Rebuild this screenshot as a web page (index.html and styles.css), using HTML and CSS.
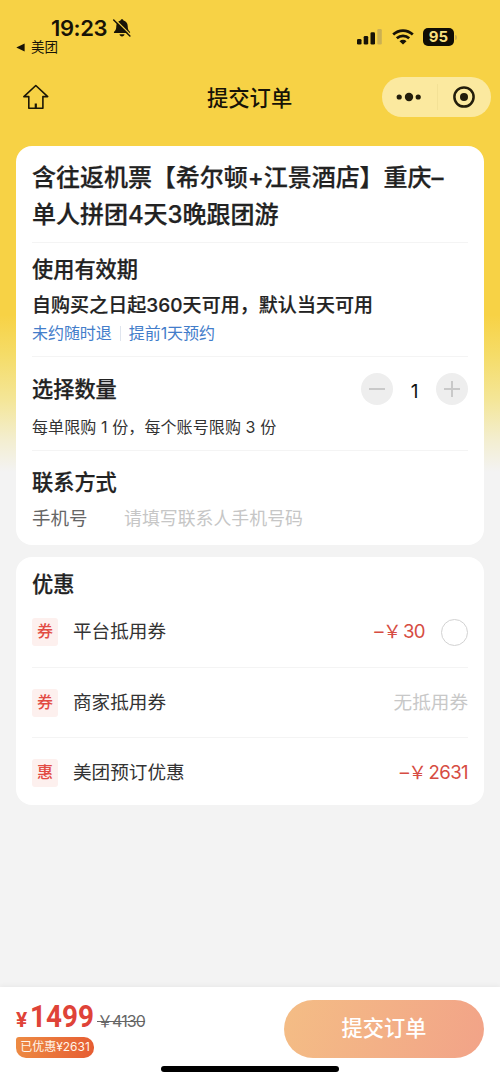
FILE: index.html
```html
<!DOCTYPE html>
<html lang="zh-CN">
<head>
<meta charset="utf-8">
<title>提交订单</title>
<link rel="stylesheet" href="styles.css">
</head>
<body>
<div class="page">
  <header class="status">
    <div class="status-left">
      <div class="clock"><span class="time">19:23</span>
        <svg class="bell" width="20" height="20" viewBox="0 0 20 20"><path d="M10 1.300c-.9 0-1.400.6-1.500 1.300C6 3.400 4.300 5.300 4.300 8c0 3.300-.7 4.300-2.200 5.700-.5.500-.2 1.300.5 1.300h14.800c.7 0 1-.8.500-1.300-1.500-1.400-2.200-2.400-2.200-5.700 0-2.700-1.700-4.600-4.200-5.400C11.400 1.900 10.900 1.300 10 1.300z" fill="#171307"/><path d="M7.500 16.200h5c-.2 1.300-1.200 2.200-2.500 2.200s-2.300-.9-2.500-2.200z" fill="#171307"/><path d="M2.800 1.200 19 17.200" stroke="#f7d245" stroke-width="1.300"/><path d="M1.700 2 17.900 18" stroke="#171307" stroke-width="1.500" stroke-linecap="round"/></svg>
      </div>
      <div class="back"><svg width="9" height="9" viewBox="0 0 9 9"><path d="M.3 4.500 8.600.5v8z" fill="#171307"/></svg><span>美团</span></div>
    </div>
    <div class="status-right">
      <svg width="25" height="18" viewBox="0 0 25 18"><g fill="#171307"><rect x="0" y="11" width="4.500" height="5.500" rx="1.300"/><rect x="6.700" y="8" width="4.500" height="8.500" rx="1.300"/><rect x="13.500" y="4.300" width="4.500" height="12.200" rx="1.300"/></g><rect x="20.300" y="1" width="4.500" height="15.500" rx="1.300" fill="#cbb052"/></svg>
      <svg class="wifi" width="22" height="16" viewBox="0 0 22 16"><g fill="none" stroke="#171307" stroke-width="2.700"><path d="M1.200 5.500c5.600-5.300 14-5.300 19.600 0"/><path d="M4.800 9.300c3.600-3.300 8.800-3.300 12.400 0"/></g><path d="M11 15.600 7.500 12.200c2-1.800 5-1.800 7 0z" fill="#171307"/></svg>
      <span class="battery">95</span><i class="battery-tip"></i>
    </div>
  </header>
  <nav class="nav">
    <svg class="home" width="26" height="26" viewBox="0 0 26 26" fill="none" stroke="#1c1706" stroke-width="1.600" stroke-linejoin="round"><path d="M12.800 1.500.9 12.600h4.900v11.700h14.100V12.600h4.800z"/><path d="M12.800 19.500v4.800" stroke-width="2.200"/></svg>
    <h1 class="nav-title">提交订单</h1>
    <div class="capsule">
      <svg width="26" height="12" viewBox="0 0 26 12" fill="#221d0b"><circle cx="3.200" cy="6" r="2.600"/><circle cx="13" cy="6" r="4.200"/><circle cx="22.200" cy="6" r="2.600"/></svg>
      <i class="capsule-line"></i>
      <svg width="24" height="24" viewBox="0 0 24 24"><circle cx="12" cy="12" r="9.600" fill="none" stroke="#221d0b" stroke-width="2.500"/><circle cx="12" cy="12" r="4" fill="#221d0b"/></svg>
    </div>
  </nav>

  <main class="content">
    <section class="card order">
      <h2 class="product">含往返机票【希尔顿+江景酒店】重庆–<br>单人拼团4天3晚跟团游</h2>
      <div class="block validity">
        <h3 class="heading">使用有效期</h3>
        <p class="valid-text">自购买之日起360天可用，默认当天可用</p>
        <p class="tags"><span>未约随时退</span><i class="tag-line"></i><span>提前1天预约</span></p>
      </div>
      <div class="block quantity">
        <div class="quantity-row">
          <h3 class="heading">选择数量</h3>
          <div class="stepper">
            <span class="step"><svg width="16" height="16" viewBox="0 0 16 16" stroke="#c9c9c9" stroke-width="2"><path d="M0 8h16"/></svg></span>
            <span class="count">1</span>
            <span class="step"><svg width="16" height="16" viewBox="0 0 16 16" stroke="#c9c9c9" stroke-width="2"><path d="M0 8h16M8 0v16"/></svg></span>
          </div>
        </div>
        <p class="limit">每单限购 1 份，每个账号限购 3 份</p>
      </div>
      <div class="block contact">
        <h3 class="heading">联系方式</h3>
        <div class="phone"><span class="phone-label">手机号</span><span class="phone-hint">请填写联系人手机号码</span></div>
      </div>
    </section>

    <section class="card discounts">
      <h3 class="heading">优惠</h3>
      <div class="row"><span class="badge">券</span><span class="name">平台抵用券</span><span class="amount">–<span class="fullwidth-yen">￥</span>30</span><i class="radio"></i></div>
      <div class="row"><span class="badge">券</span><span class="name">商家抵用券</span><span class="none">无抵用券</span></div>
      <div class="row"><span class="badge">惠</span><span class="name">美团预订优惠</span><span class="amount">–<span class="fullwidth-yen">￥</span>2631</span></div>
    </section>
  </main>

  <footer class="footer">
    <div class="pay">
      <div class="prices">
        <div class="price-line"><span class="yen">¥</span><span class="price">1499</span><s class="original">￥4130</s></div>
        <span class="saved">已优惠¥2631</span>
      </div>
      <div class="submit">提交订单</div>
    </div>
    <i class="home-bar"></i>
  </footer>
</div>
</body>
</html>
```
FILE: styles.css
```css
* { box-sizing: border-box; }
body { margin: 0; }
h1, h2, h3, p { margin: 0; }
i { display: block; }
svg { display: block; flex: none; }

.page {
  display: flex;
  flex-direction: column;
  width: 500px;
  height: 1083px;
  overflow: hidden;
  font-family: Inter, "Noto Sans CJK SC", sans-serif;
  color: #222;
  white-space: nowrap;
  background: linear-gradient(to bottom, #f7d245 0, #f7d245 315px, #f5dc68 355px, #f4e698 400px, #f3eed0 440px, #f3f3f3 472px, #f3f3f3 100%);
}

.status {
  display: flex;
  justify-content: space-between;
  height: 66px;
  padding: 16px 43px 0 16px;
  color: #171307;
}
.clock { display: flex; align-items: center; height: 23px; padding-left: 35px; gap: 5px; }
.time { font-size: 22px; font-weight: 600; letter-spacing: -0.4px; }
.back { display: flex; align-items: center; gap: 6px; height: 16px; font-size: 13.500px; line-height: 16px; }
.status-right { display: flex; align-items: center; height: 42px; }
.status-right svg:first-child { margin-left: 1px; }
.wifi { margin-left: 10px; }
.battery {
  width: 31px;
  height: 18px;
  margin-left: 9px;
  border-radius: 5px;
  background: #100d04;
  color: #f8df7e;
  font-size: 15px;
  font-weight: 700;
  line-height: 18px;
  text-align: center;
}
.battery-tip { width: 2px; height: 5px; margin-left: 1px; border-radius: 0 2px 2px 0; background: #cbb052; }

.nav {
  display: grid;
  grid-template-columns: 184px 1fr 109px;
  align-items: center;
  height: 62px;
  padding: 0 9px 0 23px;
}
.nav-title { padding-top: 1px; font-size: 21.300px; font-weight: 500; line-height: 30px; color: #171307; }
.capsule {
  display: flex;
  align-items: center;
  justify-content: space-between;
  height: 40px;
  padding: 0 15px 0 14px;
  border-radius: 20px;
  background: #fbe99f;
}
.capsule-line { width: 1px; height: 26px; background: #f3e196; }

.content { display: flex; flex-direction: column; gap: 12px; padding: 18px 16px 0; }
.card { padding: 0 16px; border-radius: 16px; background: #fff; }
.order { height: 399px; }
.heading { font-size: 21.200px; font-weight: 500; line-height: 30px; -webkit-text-stroke: 0.25px #222; }
.product {
  height: 96px;
  padding-top: 13px;
  font-size: 24px;
  font-weight: 500;
  line-height: 37px;
  letter-spacing: -0.03px;
  -webkit-text-stroke: 0.25px #222;
}
.block { border-top: 1px solid #f4f4f4; }
.validity { height: 114px; padding-top: 12px; }
.validity .heading { line-height: 29px; }
.valid-text { margin-top: 7px; font-size: 19px; font-weight: 500; line-height: 30px; letter-spacing: 0.05px; -webkit-text-stroke: 0.2px #222; }
.tags { display: flex; align-items: center; height: 24px; font-size: 16px; line-height: 24px; letter-spacing: -0.05px; color: #437dca; }
.tag-line { width: 1px; height: 15px; margin: 0 8px; background: #dfe5ee; }
.quantity { height: 94px; padding-top: 16px; }
.quantity-row { display: flex; justify-content: space-between; height: 32px; }
.quantity-row .heading { padding-top: 1px; }
.stepper { display: flex; align-items: center; width: 107px; justify-content: space-between; }
.step { display: flex; align-items: center; justify-content: center; width: 32px; height: 32px; border-radius: 50%; background: #eee; }
.count { padding-top: 6px; font-size: 19px; line-height: 24px; color: #111; }
.limit { margin-top: 10px; font-size: 16px; line-height: 24px; letter-spacing: 0.1px; color: #333; }
.contact { padding-top: 15px; }
.contact .heading { padding-top: 1px; }
.phone { display: flex; align-items: center; height: 36px; margin-top: 2px; }
.phone-label { width: 92px; font-size: 18.500px; color: #666; }
.phone-hint { font-size: 17.900px; color: #c6c6c6; }

.discounts { height: 248px; }
.discounts .heading { height: 40px; padding-top: 12px; }
.row { display: flex; align-items: center; height: 70px; font-size: 18.600px; line-height: 26px; }
.row + .row { border-top: 1px solid #f4f4f4; }
.name, .amount, .none { padding-bottom: 2px; }
.badge {
  width: 26px;
  height: 28px;
  border-radius: 3px;
  background: #fdf0ee;
  color: #e24b43;
  font-size: 16px;
  font-weight: 500;
  line-height: 26px;
  text-align: center;
}
.name { flex: 1; margin-left: 15px; color: #333; }
.amount { color: #d64c42; letter-spacing: -0.6px; }
.fullwidth-yen { letter-spacing: 1.500px; }
.none { color: #c8c8c8; }
.radio { width: 27px; height: 27px; margin-left: 16px; border: 1.500px solid #d2d2d2; border-radius: 50%; }

.footer {
  display: flex;
  flex-direction: column;
  align-items: center;
  height: 96px;
  margin-top: auto;
  background: #fff;
  box-shadow: 0 -1px 5px rgba(0, 0, 0, 0.05);
}
.pay { display: flex; justify-content: space-between; width: 100%; height: 79px; padding: 13px 16px 0; }
.price-line { display: flex; align-items: baseline; height: 37px; line-height: 32px; }
.yen { width: 14px; font-family: Roboto, sans-serif; font-size: 21px; font-weight: 700; color: #df4338; }
.price {
  width: 63px;
  font-family: Roboto, sans-serif;
  font-size: 32px;
  font-weight: 700;
  color: #df4338;
  transform: scaleX(0.87);
  transform-origin: left;
}
.original { margin-left: 4px; font-size: 16px; letter-spacing: -0.9px; color: #666; }
.saved {
  display: block;
  width: 78px;
  height: 21px;
  border-radius: 3px 10px 10px 10px;
  background: linear-gradient(100deg, #ed8b43, #e65c32);
  color: #fff5ea;
  font-size: 12px;
  line-height: 20px;
  text-align: center;
}
.submit {
  width: 200px;
  height: 58px;
  border-radius: 29px;
  background: linear-gradient(105deg, #f4bd85, #f2a388);
  color: #fff;
  font-size: 21.200px;
  font-weight: 500;
  line-height: 57px;
  text-align: center;
}
.home-bar { width: 178px; height: 6px; border-radius: 3px; background: #000; }
```
